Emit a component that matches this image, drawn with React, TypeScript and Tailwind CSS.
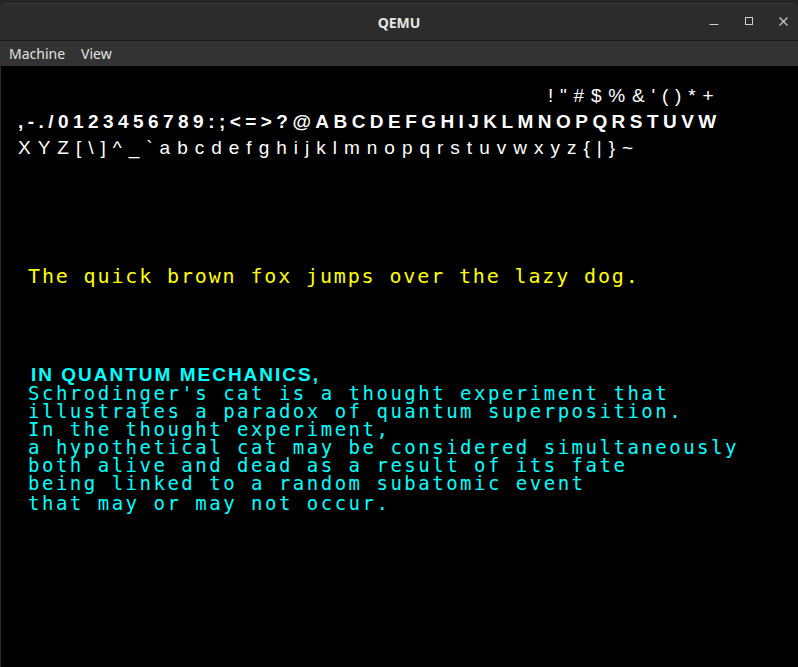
const white1 = "!\"#$%&'()*+"
const white2 = ",-./0123456789:;<=>?@ABCDEFGHIJKLMNOPQRSTUVW"
const white3 = "XYZ[\\]^_`abcdefghijklmnopqrstuvwxyz{|}~"

const cyanLines = [
    "Schrodinger's cat is a thought experiment that",
    "illustrates a paradox of quantum superposition.",
    "In the thought experiment,",
    "a hypothetical cat may be considered simultaneously",
    "both alive and dead as a result of its fate",
    "being linked to a random subatomic event",
]

const TitleBar: React.FC = () => {
    return (
        <div className="bg-[#242424] pt-[3px]">
            <div className="relative flex items-center justify-center h-[38px] bg-[#2c2c2c] rounded-t-[6px] border-t border-[#3a3a3a] border-b border-b-[#1a1a1a]">
                <span className="font-['Noto_Sans',sans-serif] font-bold text-[14px] text-[#e6e6e6]">QEMU</span>
                <div className="absolute right-[10px] top-[10px] flex items-center gap-[26px] text-[#d0d0d0]">
                    <svg width="10" height="14" viewBox="0 0 10 14"><path d="M0.5 10.5h9" stroke="currentColor" strokeWidth="1" /></svg>
                    <svg width="8" height="14" viewBox="0 0 8 14"><rect x="0.5" y="3.5" width="7" height="7" fill="none" stroke="currentColor" strokeWidth="1" /></svg>
                    <svg width="9" height="14" viewBox="0 0 9 14"><path d="M0.5 3.5l8 8M8.5 3.5l-8 8" stroke="currentColor" strokeWidth="1.1" /></svg>
                </div>
            </div>
        </div>
    )
}

const MenuBar: React.FC = () => {
    return (
        <div className="flex items-center gap-[16px] h-[25px] px-[9px] bg-[#333333] font-['Noto_Sans',sans-serif] text-[14px] text-[#e2e2e2]">
            <span>Machine</span>
            <span>View</span>
        </div>
    )
}

export default function App() {
    return (
        <div className="w-[798px] h-[667px] bg-black flex flex-col overflow-hidden">
            <TitleBar />
            <MenuBar />
            <div className="flex-1 bg-black border-l border-[#2a2a2a] whitespace-pre">
                <div className="pt-[17px] pl-[17px] font-['Liberation_Sans',sans-serif] text-[19px] leading-[26px] text-white">
                    <div className="pl-[530px] tracking-[6.8px]">{white1}</div>
                    <div className="font-bold tracking-[4.45px]">{white2}</div>
                    <div className="tracking-[7px]">{white3}</div>
                </div>
                <div className="pt-[104px] pl-[27px] font-['DejaVu_Sans_Mono',monospace] text-[20px] leading-[22px] tracking-[1.86px] text-[#ffff00]">
                    The quick brown fox jumps over the lazy dog.
                </div>
                <div className="pt-[79px] pl-[27px] font-['DejaVu_Sans_Mono',monospace] text-[19px] leading-[18px] tracking-[2.5px] text-[#00ffff]">
                    <div className="pl-[3px] font-['Liberation_Sans',sans-serif] font-bold tracking-[2px]">IN QUANTUM MECHANICS,</div>
                    {cyanLines.map((line, i) => (
                        <div key={i}>{line}</div>
                    ))}
                    <div className="mt-[2px]">that may or may not occur.</div>
                </div>
            </div>
        </div>
    )
}
